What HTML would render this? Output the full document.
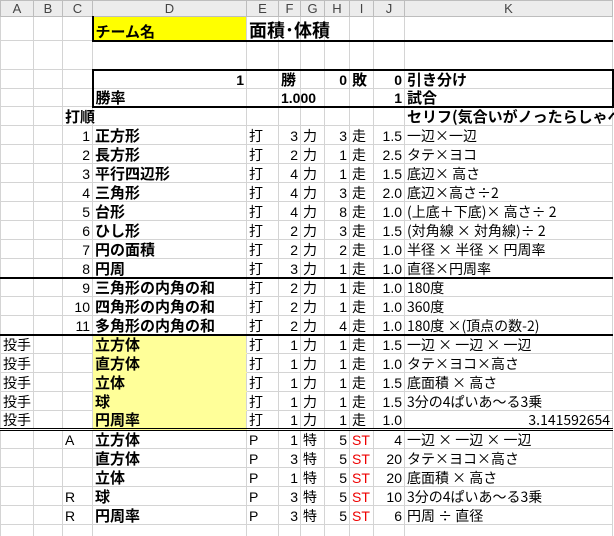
<!DOCTYPE html>
<html><head><meta charset="utf-8">
<style>
html,body{margin:0;padding:0;background:#fff;width:614px;height:536px;overflow:hidden}
table{border-collapse:collapse;table-layout:fixed;width:612px;font-family:"Liberation Sans","Noto Sans CJK JP",sans-serif;font-size:14px;color:#000}
td{border:1px solid #d4d4d4;padding:0 2px;white-space:nowrap;overflow:visible;line-height:16px;vertical-align:bottom}
td:nth-child(11){font-family:"Noto Sans CJK JP","Liberation Sans",sans-serif;font-size:14px;line-height:16px}
tr.h td{background:#ececec;border:1px solid #bdbdbd;color:#444;text-align:center;font-size:13px;line-height:14px;vertical-align:middle;font-family:"Liberation Sans",sans-serif}
.r{text-align:right}.c{text-align:center}
td.b{font-weight:bold;font-family:"Noto Sans CJK JP","Liberation Sans",sans-serif;font-size:15px;line-height:16px}
.y{background:#ffff00}
.ly{background:#ffff99;border-top-color:#ffff99;border-bottom-color:#ffff99}
.red{color:#e00}
.tb td{border-top:2px solid #000}
.dbl td{border-top:3px double #000}
</style></head><body>
<table>
<colgroup><col style="width:33px"><col style="width:29px"><col style="width:30px"><col style="width:154px"><col style="width:32px"><col style="width:22px"><col style="width:24px"><col style="width:25px"><col style="width:24px"><col style="width:31px"><col style="width:208px"></colgroup>
<tr class="h" style="height:16px"><td>A</td><td>B</td><td>C</td><td>D</td><td>E</td><td>F</td><td>G</td><td>H</td><td>I</td><td>J</td><td>K</td></tr>
<tr style="height:24px"><td></td><td></td><td></td><td class="b y" style="border-bottom:2px solid #000;border-left:2px solid #000">チーム名</td><td style="border-bottom:2px solid #000;font-size:18px;line-height:20px;font-weight:bold;font-family:'Noto Sans CJK JP',sans-serif">面積･体積</td><td style="border-bottom:2px solid #000"></td><td style="border-bottom:2px solid #000"></td><td style="border-bottom:2px solid #000"></td><td style="border-bottom:2px solid #000"></td><td style="border-bottom:2px solid #000"></td><td style="border-bottom:2px solid #000"></td></tr>
<tr style="height:29px"><td></td><td></td><td></td><td></td><td></td><td></td><td></td><td></td><td></td><td></td><td></td></tr>
<tr style="height:19px"><td></td><td></td><td></td><td class="r" style="border-top:2px solid #000;border-left:2px solid #000;font-weight:bold">1</td><td style="border-top:2px solid #000"></td><td class="b" style="border-top:2px solid #000">勝</td><td style="border-top:2px solid #000"></td><td class="r" style="border-top:2px solid #000;font-weight:bold">0</td><td class="b" style="border-top:2px solid #000">敗</td><td class="r" style="border-top:2px solid #000;font-weight:bold">0</td><td class="b" style="border-top:2px solid #000;border-right:2px solid #000">引き分け</td></tr>
<tr style="height:18px"><td></td><td></td><td></td><td class="b" style="border-bottom:2px solid #000;border-left:2px solid #000">勝率</td><td style="border-bottom:2px solid #000"></td><td style="border-bottom:2px solid #000;font-weight:bold">1.000</td><td style="border-bottom:2px solid #000"></td><td style="border-bottom:2px solid #000"></td><td style="border-bottom:2px solid #000"></td><td class="r" style="border-bottom:2px solid #000;font-weight:bold">1</td><td class="b" style="border-bottom:2px solid #000;border-right:2px solid #000">試合</td></tr>
<tr style="height:19px"><td></td><td></td><td class="b">打順</td><td></td><td></td><td></td><td></td><td></td><td></td><td></td><td class="b">セリフ(気合いがノったらしゃべ</td></tr>
<tr style="height:19px"><td></td><td></td><td class="r">1</td><td class="b">正方形</td><td>打</td><td class="r">3</td><td>力</td><td class="r">3</td><td>走</td><td class="r">1.5</td><td>一辺×一辺</td></tr>
<tr style="height:19px"><td></td><td></td><td class="r">2</td><td class="b">長方形</td><td>打</td><td class="r">2</td><td>力</td><td class="r">1</td><td>走</td><td class="r">2.5</td><td>タテ×ヨコ</td></tr>
<tr style="height:19px"><td></td><td></td><td class="r">3</td><td class="b">平行四辺形</td><td>打</td><td class="r">4</td><td>力</td><td class="r">1</td><td>走</td><td class="r">1.5</td><td>底辺× 高さ</td></tr>
<tr style="height:19px"><td></td><td></td><td class="r">4</td><td class="b">三角形</td><td>打</td><td class="r">4</td><td>力</td><td class="r">3</td><td>走</td><td class="r">2.0</td><td>底辺×高さ÷2</td></tr>
<tr style="height:19px"><td></td><td></td><td class="r">5</td><td class="b">台形</td><td>打</td><td class="r">4</td><td>力</td><td class="r">8</td><td>走</td><td class="r">1.0</td><td>(上底＋下底)× 高さ÷ 2</td></tr>
<tr style="height:19px"><td></td><td></td><td class="r">6</td><td class="b">ひし形</td><td>打</td><td class="r">2</td><td>力</td><td class="r">3</td><td>走</td><td class="r">1.5</td><td>(対角線 × 対角線)÷ 2</td></tr>
<tr style="height:19px"><td></td><td></td><td class="r">7</td><td class="b">円の面積</td><td>打</td><td class="r">2</td><td>力</td><td class="r">2</td><td>走</td><td class="r">1.0</td><td>半径 × 半径 × 円周率</td></tr>
<tr style="height:19px"><td></td><td></td><td class="r">8</td><td class="b">円周</td><td>打</td><td class="r">3</td><td>力</td><td class="r">1</td><td>走</td><td class="r">1.0</td><td>直径×円周率</td></tr>
<tr class="tb" style="height:19px"><td></td><td></td><td class="r">9</td><td class="b">三角形の内角の和</td><td>打</td><td class="r">2</td><td>力</td><td class="r">1</td><td>走</td><td class="r">1.0</td><td>180度</td></tr>
<tr style="height:19px"><td></td><td></td><td class="r">10</td><td class="b">四角形の内角の和</td><td>打</td><td class="r">2</td><td>力</td><td class="r">1</td><td>走</td><td class="r">1.0</td><td>360度</td></tr>
<tr style="height:19px"><td></td><td></td><td class="r">11</td><td class="b">多角形の内角の和</td><td>打</td><td class="r">2</td><td>力</td><td class="r">4</td><td>走</td><td class="r">1.0</td><td>180度 ×(頂点の数-2)</td></tr>
<tr class="tb" style="height:19px"><td>投手</td><td></td><td></td><td class="b ly" style="border-top:2px solid #000">立方体</td><td>打</td><td class="r">1</td><td>力</td><td class="r">1</td><td>走</td><td class="r">1.5</td><td>一辺 × 一辺 × 一辺</td></tr>
<tr style="height:19px"><td>投手</td><td></td><td></td><td class="b ly">直方体</td><td>打</td><td class="r">1</td><td>力</td><td class="r">1</td><td>走</td><td class="r">1.0</td><td>タテ×ヨコ×高さ</td></tr>
<tr style="height:19px"><td>投手</td><td></td><td></td><td class="b ly">立体</td><td>打</td><td class="r">1</td><td>力</td><td class="r">1</td><td>走</td><td class="r">1.5</td><td>底面積 × 高さ</td></tr>
<tr style="height:19px"><td>投手</td><td></td><td></td><td class="b ly">球</td><td>打</td><td class="r">1</td><td>力</td><td class="r">1</td><td>走</td><td class="r">1.5</td><td>3分の4ぱいあ～る3乗</td></tr>
<tr style="height:19px"><td>投手</td><td></td><td></td><td class="b ly">円周率</td><td>打</td><td class="r">1</td><td>力</td><td class="r">1</td><td>走</td><td class="r">1.0</td><td class="r">3.141592654</td></tr>
<tr class="dbl" style="height:19px"><td></td><td></td><td>A</td><td class="b">立方体</td><td>P</td><td class="r">1</td><td>特</td><td class="r">5</td><td class="red">ST</td><td class="r">4</td><td>一辺 × 一辺 × 一辺</td></tr>
<tr style="height:19px"><td></td><td></td><td></td><td class="b">直方体</td><td>P</td><td class="r">3</td><td>特</td><td class="r">5</td><td class="red">ST</td><td class="r">20</td><td>タテ×ヨコ×高さ</td></tr>
<tr style="height:19px"><td></td><td></td><td></td><td class="b">立体</td><td>P</td><td class="r">1</td><td>特</td><td class="r">5</td><td class="red">ST</td><td class="r">20</td><td>底面積 × 高さ</td></tr>
<tr style="height:19px"><td></td><td></td><td>R</td><td class="b">球</td><td>P</td><td class="r">3</td><td>特</td><td class="r">5</td><td class="red">ST</td><td class="r">10</td><td>3分の4ぱいあ～る3乗</td></tr>
<tr style="height:19px"><td></td><td></td><td>R</td><td class="b">円周率</td><td>P</td><td class="r">3</td><td>特</td><td class="r">5</td><td class="red">ST</td><td class="r">6</td><td>円周 ÷ 直径</td></tr>
<tr style="height:19px"><td></td><td></td><td></td><td></td><td></td><td></td><td></td><td></td><td></td><td></td><td></td></tr>
</table>
</body></html>
